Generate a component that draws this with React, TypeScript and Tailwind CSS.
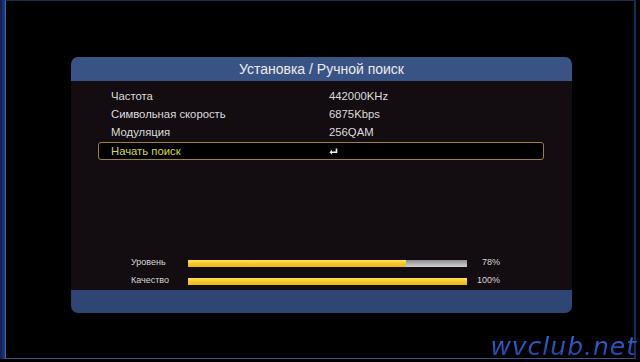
import React from 'react';

const font = { fontFamily: '"Liberation Sans", Arial, sans-serif' };

const rows = [
  { label: 'Частота', value: '442000KHz' },
  { label: 'Символьная скорость', value: '6875Kbps' },
  { label: 'Модуляция', value: '256QAM' },
];

const EnterIcon = () => (
  <svg width="9" height="7" viewBox="0 0 9 7" className="mt-[1px]">
    <path d="M7.5 0.5 V4.2 H2.5" stroke="#f0f0f0" strokeWidth="1.6" fill="none" />
    <path d="M0.5 4.2 L3 1.8 L3 6.6 Z" fill="#f0f0f0" />
  </svg>
);

const SignalBar: React.FC<{ label: string; percent: number }> = ({ label, percent }) => (
  <div className="flex items-center h-[18px] text-[9px] text-[#d6d6d6]">
    <div className="w-[117px] pl-[60px]">{label}</div>
    <div className="w-[279px] h-[7px] bg-gradient-to-b from-[#8a8a8a] via-[#b0b0b0] to-[#cfcfcf] flex">
      <div className="h-full bg-gradient-to-b from-[#ffe25a] via-[#f5c928] to-[#e8b818]" style={{ width: `${percent}%` }} />
    </div>
    <div className="w-[105px] text-right pr-[72px]">{percent}%</div>
  </div>
);

export default function App() {
  return (
    <div className="w-[640px] h-[362px] bg-black relative overflow-hidden" style={font}>
      <div className="flex h-[359px]">
        <div className="w-[5px] h-full bg-gradient-to-r from-[#0d1f4a] to-[#1e3c80]" />
        <div className="w-[631px] h-full border-t border-l border-r-2 border-b border-t-[#1c2a4c] border-l-[#3c64b0] border-r-[#1a2c58] border-b-[#35558f] pt-[56px] pl-[65px]">
          <div className="w-[501px] flex flex-col">
            <div className="h-[24px] bg-[#3a5385] rounded-t-[7px] text-center text-[14px] leading-[24px] text-[#ececec]">
              Установка / Ручной поиск
            </div>
            <div className="h-[209px] bg-[#130d12] flex flex-col pt-[6px]">
              {rows.map((r) => (
                <div key={r.label} className="flex items-center h-[18px] text-[11.3px] text-[#dcdcdc]">
                  <div className="w-[258px] pl-[40px]">{r.label}</div>
                  <div>{r.value}</div>
                </div>
              ))}
              <div className="mt-[1px] ml-[27px] w-[446px] h-[18px] border border-[#9c8440] rounded-[3px] bg-black flex items-center text-[11.3px]">
                <div className="w-[230px] pl-[12px] text-[#d4d64a]">Начать поиск</div>
                <EnterIcon />
              </div>
              <div className="mt-auto">
                <SignalBar label="Уровень" percent={78} />
                <SignalBar label="Качество" percent={100} />
              </div>
            </div>
            <div className="h-[23px] bg-[#2f4573] rounded-b-[7px]" />
          </div>
        </div>
      </div>
      <div
        className="absolute right-[3px] bottom-[3px] text-[25px] italic leading-none tracking-[1px] text-transparent bg-clip-text bg-gradient-to-b from-[#3a6ae0] to-[#1c40a0]"
        style={{ fontFamily: '"DejaVu Sans", sans-serif' }}
      >
        wvclub.net
      </div>
    </div>
  );
}
